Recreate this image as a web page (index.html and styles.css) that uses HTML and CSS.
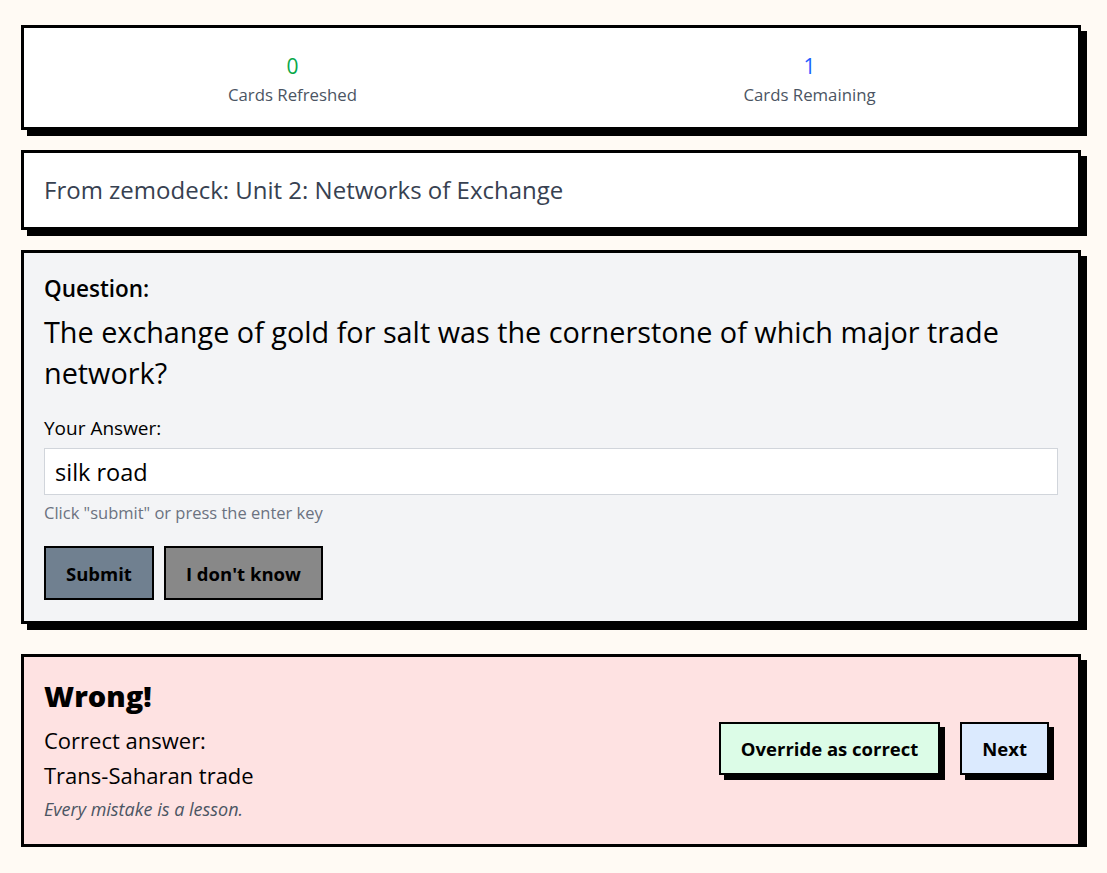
FILE: index.html
```html
<!DOCTYPE html>
<html lang="en">
<head>
  <meta charset="UTF-8" />
  <meta name="viewport" content="width=device-width, initial-scale=1.0"/>
  <title>Review</title>
  <link rel="stylesheet" href="styles.css">
</head>
<body>
  <div class="wrap">
    <div class="card stats">
      <div class="stat">
        <div class="num green">0</div>
        <div class="lbl">Cards Refreshed</div>
      </div>
      <div class="stat">
        <div class="num blue">1</div>
        <div class="lbl">Cards Remaining</div>
      </div>
    </div>

    <div class="card deck">From zemodeck: Unit 2: Networks of Exchange</div>

    <div class="card question">
      <div class="q-label">Question:</div>
      <div class="q-text">The exchange of gold for salt was the cornerstone of which major trade network?</div>
      <label class="a-label" for="answer">Your Answer:</label>
      <input id="answer" type="text" value="silk road">
      <div class="hint">Click "submit" or press the enter key</div>
      <div class="btns">
        <button class="btn submit">Submit</button>
        <button class="btn idk">I don't know</button>
      </div>
    </div>

    <div class="card result">
      <div class="result-text">
        <div class="wrong">Wrong!</div>
        <div class="ca">Correct answer:</div>
        <div class="ca-val">Trans-Saharan trade</div>
        <div class="quote">Every mistake is a lesson.</div>
      </div>
      <div class="result-btns">
        <button class="btn raised override">Override as correct</button>
        <button class="btn raised next">Next</button>
      </div>
    </div>
  </div>
</body>
</html>
```

FILE: styles.css
```css
body {
  margin: 0;
  background: #fffaf4;
  font-family: "Open Sans", sans-serif;
  color: #000;
}
.wrap {
  width: 1060px;
  margin-left: 21px;
  padding-top: 25px;
  display: flex;
  flex-direction: column;
  gap: 20px;
}
.card {
  border: 3px solid #000;
  box-shadow: 6px 6px 0 #000;
  background: #fff;
}
.stats {
  display: grid;
  grid-template-columns: 1fr 1fr;
  padding: 24px 10px 20px;
  text-align: center;
}
.num {
  font-size: 21px;
  line-height: 28px;
}
.green { color: #0aa84a; }
.blue { color: #1f5eff; }
.lbl {
  font-size: 16.8px;
  line-height: 24px;
  margin-top: 3px;
  color: #4b5563;
}
.deck {
  padding: 22px 20px;
  font-size: 24px;
  line-height: 30px;
  color: #374151;
}
.question {
  background: #f3f4f6;
  padding: 20px 20px 21px;
}
.q-label {
  font-size: 22.5px;
  font-weight: 600;
  line-height: 32px;
  margin-bottom: 6px;
}
.q-text {
  font-size: 28.8px;
  line-height: 41px;
  margin-bottom: 21px;
}
.a-label {
  display: block;
  font-size: 19px;
  font-weight: 500;
  line-height: 28px;
  margin-bottom: 6px;
}
input {
  display: block;
  width: 100%;
  box-sizing: border-box;
  height: 47px;
  border: 1px solid #d1d5db;
  background: #fff;
  padding: 0 10px;
  font-family: inherit;
  font-size: 23.5px;
  color: #000;
}
.hint {
  font-size: 16.5px;
  color: #6b7280;
  line-height: 20px;
  margin-top: 8px;
}
.btns {
  display: flex;
  gap: 10px;
  margin-top: 23px;
}
.btn {
  font-family: inherit;
  font-weight: 700;
  font-size: 18.5px;
  border: 2px solid #000;
  color: #000;
  padding: 0 20px;
  height: 54px;
  cursor: pointer;
}
.submit { background: #708090; }
.idk { background: #888888; }
.result {
  margin-top: 10px;
  background: #fee2e2;
  padding: 20px 20px 23px;
  display: flex;
  justify-content: space-between;
  align-items: center;
}
.wrong {
  font-size: 29px;
  font-weight: 800;
  line-height: 38px;
  margin-bottom: 10px;
}
.ca, .ca-val {
  font-size: 22px;
  line-height: 30px;
}
.ca-val { margin-top: 5px; }
.quote {
  font-style: italic;
  font-size: 18px;
  color: #4b5563;
  line-height: 24px;
  margin-top: 7px;
}
.result-btns {
  display: flex;
  gap: 20px;
  margin-right: 9px;
  margin-bottom: 2px;
}
.raised {
  height: 53px;
  box-shadow: 5px 5px 0 #000;
}
.override { background: #dcfce7; }
.next { background: #dbeafe; }
```
